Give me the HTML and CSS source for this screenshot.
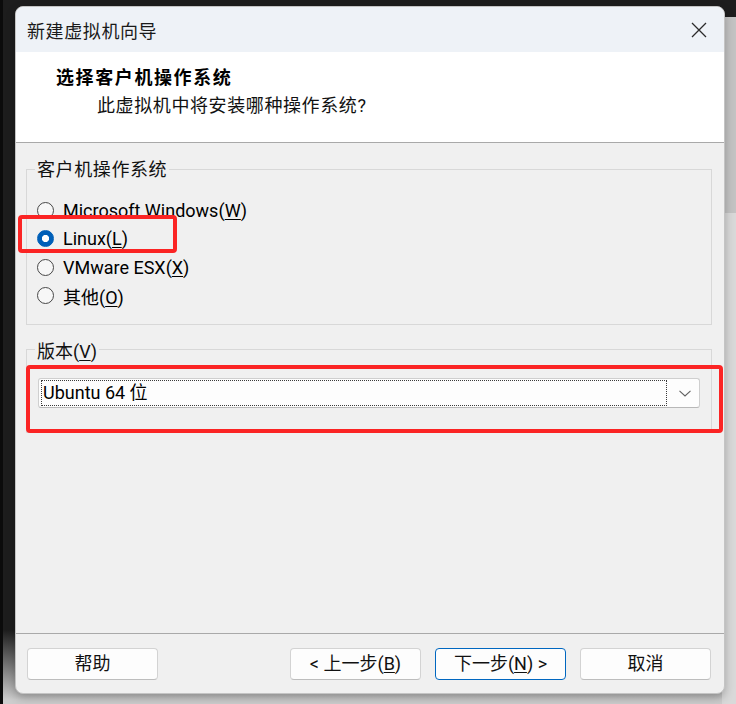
FILE: index.html
```html
<!DOCTYPE html>
<html lang="zh-CN">
<head>
<meta charset="utf-8">
<title>新建虚拟机向导</title>
<link rel="stylesheet" href="styles.css">
</head>
<body>
<div class="backdrop"></div>
<div class="window">
  <div class="titlebar">
    <span class="title">新建虚拟机向导</span>
    <span class="close">
      <svg width="16" height="16" viewBox="0 0 16 16"><path d="M1 1 L15 15 M15 1 L1 15" stroke="#2b2b2b" stroke-width="1.3" fill="none"/></svg>
    </span>
  </div>
  <div class="header">
    <div class="h-title">选择客户机操作系统</div>
    <div class="h-sub">此虚拟机中将安装哪种操作系统?</div>
  </div>
  <div class="content">
    <div class="group group-os">
      <div class="group-label">客户机操作系统</div>
      <div class="radios">
        <div class="radio"><span class="dot"></span><span class="rtext">Microsoft Windows(<u>W</u>)</span></div>
        <div class="radio"><span class="dot checked"></span><span class="rtext">Linux(<u>L</u>)</span></div>
        <div class="radio"><span class="dot"></span><span class="rtext">VMware ESX(<u>X</u>)</span></div>
        <div class="radio"><span class="dot"></span><span class="rtext">其他(<u>O</u>)</span></div>
      </div>
      <div class="mark mark-linux"></div>
    </div>
    <div class="group group-ver">
      <div class="group-label">版本(<u>V</u>)</div>
      <div class="combo">
        <div class="combo-field">Ubuntu 64 位</div>
        <svg class="chev" width="12" height="7" viewBox="0 0 12 7"><path d="M0.5 0.8 L6 6 L11.5 0.8" stroke="#606060" stroke-width="1.1" fill="none"/></svg>
      </div>
      <div class="mark mark-ver"></div>
    </div>
  </div>
  <div class="footer">
    <div class="btn">帮助</div>
    <div class="btn-group">
      <div class="btn">&lt; 上一步(<u>B</u>)</div>
      <div class="btn primary">下一步(<u>N</u>) &gt;</div>
      <div class="btn">取消</div>
    </div>
  </div>
</div>
</body>
</html>
```
FILE: styles.css
```css
* { box-sizing: border-box; }

html, body {
  margin: 0;
  padding: 0;
}

body {
  width: 736px;
  height: 704px;
  overflow: hidden;
  position: relative;
  font-family: Roboto, "Noto Sans CJK SC", sans-serif;
  font-size: 18px;
  color: #111;
  background:
    linear-gradient(to right, #0b0b0b 0 3px, transparent 3px),
    linear-gradient(to bottom, #1d1d1d 0, #1d1d1d 630px, #cdcdcd 700px);
}

.backdrop {
  position: absolute;
  right: 0;
  top: 17px;
  bottom: 0;
  width: 14px;
  background: linear-gradient(to bottom, #c3c3c3 0 196px, #d9d9d9 196px);
}

.window {
  position: relative;
  margin: 6px 0 0 15px;
  width: 710px;
  height: 688px;
  border: 1px solid #c4c4c4;
  border-radius: 8px;
  overflow: hidden;
  background: #f0f0f0;
  display: flex;
  flex-direction: column;
  box-shadow: 0 4px 10px rgba(0, 0, 0, 0.25);
}

.titlebar {
  height: 45px;
  flex: none;
  background: #eef2f7;
  display: flex;
  align-items: center;
  justify-content: space-between;
  padding: 0 17px 0 11px;
}

.title {
  font-family: "Noto Sans CJK SC", sans-serif;
  font-size: 18px;
  letter-spacing: 0.6px;
  line-height: 24px;
  color: #1a1a1a;
}

.close {
  display: flex;
  width: 16px;
  height: 16px;
}

.header {
  height: 91px;
  flex: none;
  background: #ffffff;
  border-bottom: 1px solid #a9a9a9;
  padding: 12px 0 0 40px;
}

.h-title {
  font-family: "Noto Sans CJK SC", sans-serif;
  font-weight: bold;
  letter-spacing: 1.6px;
  line-height: 24px;
  color: #000;
}

.h-sub {
  margin: 6px 0 0 41px;
  line-height: 24px;
  letter-spacing: 0.6px;
  color: #111;
}

.content {
  flex: 1;
  display: flex;
  flex-direction: column;
}

.group {
  position: relative;
  border: 1px solid #d8d8d8;
  margin: 0 12px 0 10px;
  display: flex;
  flex-direction: column;
  align-items: flex-start;
}

.group-os {
  margin-top: 26px;
  padding-bottom: 14px;
}

.group-ver {
  margin-top: 24px;
  padding-bottom: 24px;
  align-items: stretch;
}

.group-label {
  align-self: flex-start;
  line-height: 24px;
  background: #f0f0f0;
  padding: 0 2px;
  margin-left: 8px;
  color: #111;
}

.group-os .group-label {
  margin-top: -12px;
  letter-spacing: 0.6px;
}

.group-ver .group-label { margin-top: -10px; }

.radios {
  padding: 14px 0 0 10px;
  display: flex;
  flex-direction: column;
}

.radio {
  height: 28.5px;
  display: flex;
  align-items: center;
  color: #000;
}

.dot {
  width: 17px;
  height: 17px;
  border-radius: 50%;
  border: 1px solid #474747;
  background: #f7f7f7;
  margin-right: 9px;
  flex: none;
}

.dot.checked {
  border-color: #005fb8;
  background: radial-gradient(circle, #ffffff 0 3.3px, #005fb8 3.9px);
}

u {
  text-decoration-thickness: 1px;
  text-underline-offset: 2px;
}

.mark {
  position: absolute;
  border: 4px solid #fb2424;
  border-radius: 4px;
}

.mark-linux {
  left: -9px;
  top: 45px;
  width: 159px;
  height: 38px;
}

.mark-ver {
  left: -1px;
  top: 15px;
  width: 697px;
  height: 68px;
}

.combo {
  margin: 14px 11px 0 11px;
  height: 30px;
  background: #fdfdfd;
  border: 1px solid #cfcfcf;
  border-bottom-color: #b8b8b8;
  border-radius: 3px;
  display: flex;
  align-items: center;
  padding: 0 8px 0 2px;
}

.combo-field {
  flex: 1;
  height: 26px;
  border: 1px dotted #3a3a3a;
  line-height: 24px;
  padding-left: 1px;
  margin-right: 12px;
  color: #000;
}

.chev {
  flex: none;
}

.footer {
  height: 60px;
  flex: none;
  border-top: 1px solid #a9a9a9;
  padding: 14px 13px 0 11px;
  display: flex;
  justify-content: space-between;
  align-items: flex-start;
}

.btn-group {
  display: flex;
  gap: 14px;
}

.btn {
  width: 131px;
  height: 32px;
  background: #fdfdfd;
  border: 1px solid #d3d3d3;
  border-bottom-color: #bdbdbd;
  border-radius: 4px;
  display: flex;
  align-items: center;
  justify-content: center;
  color: #111;
  line-height: 24px;
}

.btn.primary {
  border: 1px solid #0067c0;
}
```
